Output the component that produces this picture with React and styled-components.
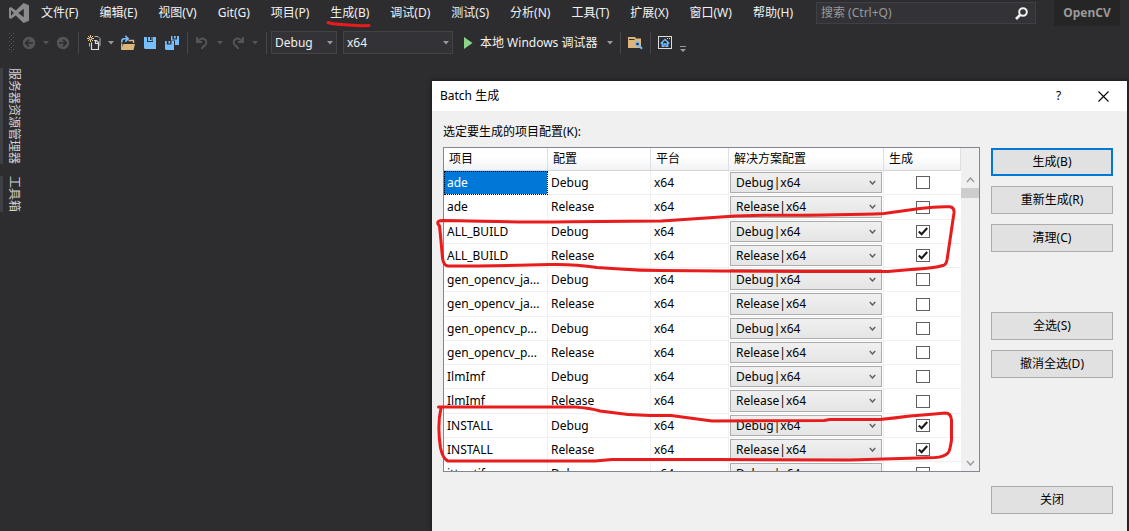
import React from "react";
import styled, { createGlobalStyle, css } from "styled-components";

const GlobalStyle = createGlobalStyle`
  *, *::before, *::after { box-sizing: border-box; }
  body {
    margin: 0;
    background: #2d2d30;
    font: 12px/16px "Noto Sans", "Noto Sans CJK SC", sans-serif;
  }
  button, input, select { font: inherit; margin: 0; }
`;

const Shell = styled.div`
  display: flex;
  flex-direction: column;
  min-height: 100vh;
  overflow: hidden;
  color: #f1f1f1;
`;

/* ---------- menu bar ---------- */

const TitleRow = styled.header`
  display: flex;
  align-items: center;
  height: 26px;
  padding: 0 9px;
`;

const Menu = styled.nav`
  display: flex;
  flex: 1;
  gap: 21px;
  margin-left: 12px;
`;

const MenuItem = styled.button`
  position: relative;
  padding: 0;
  border: 0;
  background: none;
  color: inherit;
  white-space: nowrap;
`;

const Underline = styled.svg`
  position: absolute;
  left: -4px;
  top: 15px;
  pointer-events: none;
`;

const SearchBox = styled.label`
  display: flex;
  align-items: center;
  width: 220px;
  height: 22px;
  margin-right: 18px;
  padding: 0 7px 0 4px;
  border: 1px solid #3f3f46;
  background: #333337;
`;

const SearchInput = styled.input`
  flex: 1;
  min-width: 0;
  padding: 0;
  border: 0;
  outline: 0;
  background: none;
  color: #f1f1f1;
  &::placeholder { color: #999999; opacity: 1; }
`;

const SolutionName = styled.div`
  width: 66px;
  line-height: 26px;
  text-align: center;
  background: #252526;
  color: #999999;
  font-size: 12px;
  font-weight: 700;
`;

/* ---------- toolbar ---------- */

const ToolbarRow = styled.div`
  display: flex;
  align-items: center;
  height: 33px;
  padding-left: 9px;
`;

const ToolButton = styled.button`
  display: flex;
  align-items: center;
  justify-content: center;
  width: ${(p) => p.$w || 22}px;
  height: 24px;
  padding: 0;
  border: 0;
  background: none;
  color: #999999;
  &:disabled { color: #555558; }
`;

const Separator = styled.span`
  display: flex;
  justify-content: center;
  width: ${(p) => p.$w || 8}px;
  &::before {
    content: "";
    width: 1px;
    height: 22px;
    background: #46464a;
  }
`;

const Grip = styled.svg`
  margin-right: 5px;
`;

const RunButton = styled.button`
  display: flex;
  align-items: center;
  gap: 7px;
  width: 163px;
  height: 24px;
  padding: 0 3px 0 10px;
  border: 0;
  background: none;
  color: inherit;
  white-space: nowrap;
  > svg:last-child {
    margin-left: auto;
    color: #999999;
  }
`;

const Combo = styled.span`
  position: relative;
  display: block;
  width: ${(p) => p.$w}px;
  margin-right: ${(p) => p.$gap || 0}px;
  color: #999999;
  > svg {
    position: absolute;
    right: 4px;
    top: 10px;
    pointer-events: none;
  }
`;

const ToolSelect = styled.select`
  display: block;
  appearance: none;
  width: 100%;
  height: 23px;
  padding: 0 3px;
  border: 1px solid #434346;
  border-radius: 0;
  background: #333337;
  color: #f1f1f1;
`;

/* ---------- workspace ---------- */

const Workspace = styled.main`
  display: flex;
  flex: 1;
  align-items: stretch;
  justify-content: space-between;
  padding-right: 2px;
`;

const SideTabs = styled.aside`
  display: flex;
  flex-direction: column;
  align-items: flex-start;
  gap: 12px;
  padding-top: 9px;
`;

const SideTab = styled.button`
  padding: 0 0 0 3px;
  border: 0;
  border-left: 3px solid #3f3f46;
  background: none;
  color: #d0d0d0;
  line-height: 16px;
  writing-mode: vertical-rl;
  text-orientation: sideways;
  white-space: nowrap;
`;

/* ---------- dialog ---------- */

const Dialog = styled.section`
  position: relative;
  width: 695px;
  margin-top: 22px;
  background: #f0f0f0;
  color: #000000;
  box-shadow: 0 0 4px 1px rgba(0, 0, 0, 0.4);
`;

const DialogTitle = styled.div`
  display: flex;
  align-items: center;
  height: 30px;
  padding: 0 1px 0 8px;
  background: #ffffff;
`;

const DialogHeading = styled.h1`
  flex: 1;
  margin: 0;
  font-size: 12px;
  font-weight: 400;
`;

const CaptionButton = styled.button`
  display: flex;
  align-items: center;
  justify-content: center;
  width: 45px;
  height: 30px;
  padding: 0;
  border: 0;
  background: none;
  color: #000000;
`;

const ListLabel = styled.div`
  padding: 13px 11px 7px;
`;

const DialogBody = styled.div`
  display: flex;
  align-items: flex-start;
  gap: 11px;
  padding: 0 14px 17px 11px;
`;

const ListBox = styled.div`
  display: flex;
  flex: 1;
  height: 325px;
  border: 1px solid #828790;
  background: #ffffff;
  overflow: hidden;
`;

const Grid = styled.table`
  flex: 1;
  align-self: flex-start;
  width: 517px;
  table-layout: fixed;
  border-collapse: separate;
  border-spacing: 0;
`;

const HeadCell = styled.th`
  width: ${(p) => p.$w}px;
  height: 23px;
  padding: 0 5px;
  border-right: 1px solid #dedfe1;
  border-bottom: 1px solid #d5d5d5;
  background: linear-gradient(#ffffff 40%, #f1f2f4);
  font-weight: 400;
  text-align: left;
`;

const Row = styled.tr`
  --row: 24px;
  &:nth-child(4n + 2) { --row: 25px; }
`;

const Cell = styled.td`
  height: var(--row);
  padding: 0 3px;
  border-right: 1px solid #f0f0f0;
  border-bottom: 1px solid #f0f0f0;
  white-space: nowrap;
  ${(p) => p.$selected && css`
    background: #0078d7;
    color: #ffffff;
    outline: 1px dotted #000000;
    outline-offset: -1px;
  `}
`;

const ComboCell = styled(Cell)`
  padding: 0 1px;
`;

const RowCombo = styled.span`
  position: relative;
  display: block;
  > svg {
    position: absolute;
    right: 6px;
    top: 8px;
    pointer-events: none;
  }
`;

const RowSelect = styled.select`
  display: block;
  appearance: none;
  width: 152px;
  height: calc(var(--row) - 3px);
  padding: 0 5px;
  border: 1px solid #acacac;
  border-radius: 0;
  background: linear-gradient(#f0f0f0, #e5e5e5);
  color: #000000;
`;

const CheckCell = styled(Cell)`
  border-right: 0;
`;

const Check = styled.span`
  position: relative;
  display: block;
  width: 14px;
  height: 13px;
  margin: 0 auto;
  > svg {
    position: absolute;
    left: 2px;
    top: 2px;
    pointer-events: none;
    visibility: hidden;
  }
  > input:checked + svg { visibility: visible; }
`;

const CheckInput = styled.input`
  display: block;
  appearance: none;
  width: 14px;
  height: 13px;
  border: 1px solid #606060;
  background: #ffffff;
`;

const ScrollTrack = styled.div`
  display: flex;
  flex-direction: column;
  align-items: center;
  width: 18px;
  padding: 29px 0 5px;
  background: #f0f0f0;
`;

const ScrollThumb = styled.div`
  width: 100%;
  height: 10px;
  margin: 5px 0 auto;
  background: #cdcdcd;
`;

const Actions = styled.div`
  display: flex;
  flex-direction: column;
  gap: 10px;
  width: 122px;
  padding-top: 1px;
`;

const ActionButton = styled.button`
  height: 28px;
  margin-top: ${(p) => p.$above || 0}px;
  padding: 0;
  border: ${(p) => (p.$primary ? "2px solid #0078d7" : "1px solid #adadad")};
  background: #e1e1e1;
  color: #000000;
`;

const Marks = styled.svg`
  position: absolute;
  left: 0;
  top: 0;
  pointer-events: none;
`;

/* ---------- drawings ---------- */

const Logo = () => (
  <svg width="20" height="20" viewBox="0 0 20 20" aria-hidden="true">
    <path
      fill="#8a8a8c"
      fillRule="evenodd"
      d="M14.5 0 20 2.3V17.7L14.5 20 6.8 12.4 2 16 0 15V5L2 4 6.8 7.6ZM14.8 5.8 9.3 10 14.8 14.2ZM2 7.2V12.8L4.8 10Z"
    />
  </svg>
);

const Caret = () => (
  <svg width="6" height="4" viewBox="0 0 6 4" aria-hidden="true">
    <path fill="currentColor" d="M0 0H6L3 3.5Z" />
  </svg>
);

const CircleArrow = ({ flip }) => (
  <svg width="14" height="14" viewBox="0 0 14 14" aria-hidden="true">
    <circle cx="7" cy="7" r="6.2" fill="currentColor" />
    <path
      transform={flip ? "matrix(-1 0 0 1 14 0)" : undefined}
      d="M11 7H4M7 3.7 3.7 7 7 10.3"
      fill="none"
      stroke="#2d2d30"
      strokeWidth="1.7"
    />
  </svg>
);

const NewItemIcon = () => (
  <svg width="14" height="16" viewBox="0 0 14 16" aria-hidden="true">
    <path d="M7.500 1.500H11L13 3.500V11M2.500 8V11.500" fill="none" stroke="#b4b4b4" />
    <path d="M4.500 7.500V14.500H11.500V7.500L9.500 5.500H7M8.500 5.500V8.500H11.500" fill="none" stroke="#dcdcdc" strokeWidth="1.2" />
    <path d="M3.500 0V7M0 3.500H7M1 1 6 6M6 1 1 6" stroke="#f2cf8d" strokeWidth="1" />
    <circle cx="3.500" cy="3.500" r="1" fill="#2d2d30" />
  </svg>
);

const OpenIcon = () => (
  <svg width="16" height="16" viewBox="0 0 16 16" aria-hidden="true">
    <path d="M8.500 5.500H13.500V8M1.700 8.500V14" fill="none" stroke="#dcb67a" strokeWidth="1.4" />
    <path d="M3.500 9H15L13.500 15H1Z" fill="#dcb67a" />
    <path d="M1.800 7.500V6C1.800 4.500 2.800 3.700 4.300 3.700H8M5.300 .800 8.200 3.700 5.300 6.600" fill="none" stroke="#75bfff" strokeWidth="1.6" />
  </svg>
);

const SaveIcon = () => (
  <svg width="14" height="14" viewBox="0 0 14 14" aria-hidden="true">
    <path fill="#75bfff" d="M1 1H4V6H10V1H13V13H2L1 12Z" />
    <path fill="#75bfff" d="M5 1H7V4H5ZM8.500 1H9.500V5H5V4H8.500Z" />
  </svg>
);

const SaveAllIcon = () => (
  <svg width="14" height="14" viewBox="0 0 14 14" aria-hidden="true">
    <path fill="#75bfff" d="M6 0H7.500V3.500H12V0H14V9H10V4.500H6ZM9 0H10.700V2.500H9Z" />
    <path fill="#75bfff" d="M0 5H1.700V8.500H6.500V5H9V14H1L0 13ZM3.500 5H5.200V7.500H3.500Z" />
  </svg>
);

const TurnIcon = ({ flip }) => (
  <svg width="14" height="14" viewBox="0 0 14 14" aria-hidden="true">
    <path
      transform={flip ? "matrix(-1 0 0 1 14 0)" : undefined}
      d="M2 1V6H7M2.500 5.500C5 2.500 8 1.800 10 3.500 12 5.300 11.500 7.800 10 9.300L6.500 12.800"
      fill="none"
      stroke="currentColor"
      strokeWidth="2"
    />
  </svg>
);

const FindFolderIcon = () => (
  <svg width="16" height="14" viewBox="0 0 16 14" aria-hidden="true">
    <path fill="#dcb67a" d="M1 1H8L9 2.500H14V12H1Z" />
    <path stroke="#2d2d30" strokeWidth="1" d="M2 3.500H7.500" />
    <path d="M11.500 9 15 12.700" stroke="#75bfff" strokeWidth="2" />
    <circle cx="10.500" cy="8" r="2" fill="#2d2d30" stroke="#75bfff" strokeWidth="1.4" />
  </svg>
);

const HomeIcon = () => (
  <svg width="14" height="13" viewBox="0 0 14 13" aria-hidden="true">
    <rect x=".5" y=".5" width="13" height="12" fill="none" stroke="#dcdcdc" />
    <path d="M9 2.500H10M11 2.500H12" stroke="#dcdcdc" />
    <path d="M2.800 7.500 7 3.500 11.200 7.500M4.300 6.500V10.300H6V8H8V10.300H9.700V6.500" fill="none" stroke="#75bfff" strokeWidth="1.3" />
  </svg>
);

const Chevron = ({ up, small }) => (
  <svg width={small ? 7 : 9} height={small ? 5 : 6} viewBox="0 0 9 6" aria-hidden="true">
    <path
      d={up ? "M1 5 4.5 1 8 5" : "M1 1 4.5 5 8 1"}
      fill="none"
      stroke={small ? "#606060" : "#9a9a9a"}
      strokeWidth={small ? 1.8 : 1.4}
    />
  </svg>
);

const Tick = () => (
  <svg width="10" height="9" viewBox="0 0 10 9" aria-hidden="true">
    <path d="M.8 4.5 3.6 7.2 9.2 1" fill="none" stroke="#1a1a1a" strokeWidth="2.1" />
  </svg>
);

/* ---------- data ---------- */

const MENUS = [
  "文件(F)", "编辑(E)", "视图(V)", "Git(G)", "项目(P)", "生成(B)", "调试(D)",
  "测试(S)", "分析(N)", "工具(T)", "扩展(X)", "窗口(W)", "帮助(H)",
];

const PROJECTS = [
  ["ade", "Debug"],
  ["ade", "Release"],
  ["ALL_BUILD", "Debug", true],
  ["ALL_BUILD", "Release", true],
  ["gen_opencv_ja...", "Debug"],
  ["gen_opencv_ja...", "Release"],
  ["gen_opencv_p...", "Debug"],
  ["gen_opencv_p...", "Release"],
  ["IlmImf", "Debug"],
  ["IlmImf", "Release"],
  ["INSTALL", "Debug", true],
  ["INSTALL", "Release", true],
  ["ittnotify", "Debug"],
];

const COLUMNS = [["项目", 104], ["配置", 103], ["平台", 78], ["解决方案配置", 155], ["生成", 77]];

function Toolbar() {
  return (
    <ToolbarRow role="toolbar">
      <Grip width="5" height="20" viewBox="0 0 5 20" aria-hidden="true">
        <path d="M.5 0V20M4.5 0V20" stroke="#5a5a5e" strokeDasharray="1 3" />
        <path d="M2.5 2V20" stroke="#5a5a5e" strokeDasharray="1 3" />
      </Grip>
      <ToolButton $w={20} disabled aria-label="后退"><CircleArrow /></ToolButton>
      <ToolButton $w={14} disabled aria-label="后退列表"><Caret /></ToolButton>
      <ToolButton $w={20} disabled aria-label="前进"><CircleArrow flip /></ToolButton>
      <Separator $w={10} />
      <ToolButton aria-label="新建"><NewItemIcon /></ToolButton>
      <ToolButton $w={12} aria-label="新建列表"><Caret /></ToolButton>
      <ToolButton aria-label="打开"><OpenIcon /></ToolButton>
      <ToolButton aria-label="保存"><SaveIcon /></ToolButton>
      <ToolButton aria-label="全部保存"><SaveAllIcon /></ToolButton>
      <Separator />
      <ToolButton disabled aria-label="撤消"><TurnIcon /></ToolButton>
      <ToolButton $w={14} disabled aria-label="撤消列表"><Caret /></ToolButton>
      <ToolButton disabled aria-label="重做"><TurnIcon flip /></ToolButton>
      <ToolButton $w={12} disabled aria-label="重做列表"><Caret /></ToolButton>
      <Separator $w={10} />
      <Combo $w={66} $gap={6}>
        <ToolSelect aria-label="配置" defaultValue="Debug">
          <option>Debug</option>
          <option>Release</option>
        </ToolSelect>
        <Caret />
      </Combo>
      <Combo $w={110}>
        <ToolSelect aria-label="平台"><option>x64</option></ToolSelect>
        <Caret />
      </Combo>
      <RunButton>
        <svg width="10" height="12" viewBox="0 0 10 12" aria-hidden="true">
          <path fill="#8ad48a" d="M1 0 9.5 6 1 12Z" />
        </svg>
        本地 Windows 调试器
        <Caret />
      </RunButton>
      <Separator />
      <ToolButton aria-label="在文件中查找"><FindFolderIcon /></ToolButton>
      <Separator />
      <ToolButton aria-label="主页"><HomeIcon /></ToolButton>
      <ToolButton $w={14} aria-label="工具栏选项">
        <svg width="6" height="18" viewBox="0 0 6 18" aria-hidden="true">
          <path fill="currentColor" d="M0 12H6V13H0ZM0 15H6L3 18Z" />
        </svg>
      </ToolButton>
    </ToolbarRow>
  );
}

function ProjectRow({ name, config, checked, selected }) {
  const target = `${config}|x64`;
  return (
    <Row>
      <Cell $selected={selected}>{name}</Cell>
      <Cell>{config}</Cell>
      <Cell>x64</Cell>
      <ComboCell>
        <RowCombo>
          <RowSelect aria-label={`${name} 解决方案配置`} defaultValue={target}>
            <option>Debug|x64</option>
            <option>Release|x64</option>
          </RowSelect>
          <Chevron small />
        </RowCombo>
      </ComboCell>
      <CheckCell>
        <Check>
          <CheckInput type="checkbox" aria-label={`生成 ${name} ${config}`} defaultChecked={checked} />
          <Tick />
        </Check>
      </CheckCell>
    </Row>
  );
}

function BatchDialog() {
  return (
    <Dialog role="dialog" aria-labelledby="batch-title">
      <DialogTitle>
        <DialogHeading id="batch-title">Batch 生成</DialogHeading>
        <CaptionButton>?</CaptionButton>
        <CaptionButton aria-label="关闭窗口">
          <svg width="11" height="11" viewBox="0 0 11 11" aria-hidden="true">
            <path d="M.5 .5 10.5 10.5M10.5 .5 .5 10.5" stroke="#000000" strokeWidth="1.1" />
          </svg>
        </CaptionButton>
      </DialogTitle>
      <ListLabel id="project-list">选定要生成的项目配置(K):</ListLabel>
      <DialogBody>
        <ListBox>
          <Grid aria-labelledby="project-list">
            <thead>
              <tr>
                {COLUMNS.map(([title, width]) => (
                  <HeadCell key={title} $w={width} scope="col">{title}</HeadCell>
                ))}
              </tr>
            </thead>
            <tbody>
              {PROJECTS.map(([name, config, checked], i) => (
                <ProjectRow key={name + config} name={name} config={config} checked={checked} selected={i === 0} />
              ))}
            </tbody>
          </Grid>
          <ScrollTrack>
            <Chevron up />
            <ScrollThumb />
            <Chevron />
          </ScrollTrack>
        </ListBox>
        <Actions>
          <ActionButton $primary>生成(B)</ActionButton>
          <ActionButton>重新生成(R)</ActionButton>
          <ActionButton>清理(C)</ActionButton>
          <ActionButton $above={50}>全选(S)</ActionButton>
          <ActionButton>撤消全选(D)</ActionButton>
          <ActionButton $above={98}>关闭</ActionButton>
        </Actions>
      </DialogBody>
      <Marks width="695" height="450" viewBox="432 81 695 450" aria-hidden="true">
        <g fill="none" stroke="#e81c1c" strokeWidth="3" strokeLinecap="round" strokeLinejoin="round">
          <path d="M438 224C437 221 439 220.7 443 220.5 C480 221 520 222.5 555 222 S625 221 662 221 Q690 219 728 216.5 C760 214.5 790 215.5 824 215 S865 214.5 884 213.5 Q902 211 920 208.5 C933 206.8 942 206.5 950 206.8 Q954.5 207.5 954 213 Q952 226 950 240 L947 260 Q946 265 943 265.5 Q935 268 911 269.5 L888 271.5 H805 L720 271 L660 270.5 Q640 270.5 620 269 L597 267.5 Q575 264 550 264.5 Q495 266 448 266 Q443.5 265.5 442.5 258 Q441 240 439.5 226Z" />
          <path d="M438.5 407H575Q590 408 600 411Q625 415 650 415.5H671L712 421L824 420.5L830 419.5L880 419.5Q895 418 910 416Q930 414.5 945 413Q951 413 951.5 420V440Q950 451 948 453Q944 457 935 457.5Q900 458.5 850 460L720 459.5H612L595 461H448Q443 459 440.5 448Q437 425 441 408" />
        </g>
      </Marks>
    </Dialog>
  );
}

export default function App() {
  return (
    <Shell>
      <GlobalStyle />
      <TitleRow>
        <Logo />
        <Menu>
          {MENUS.map((label) => (
            <MenuItem key={label}>
              {label}
              {label === "生成(B)" && (
                <Underline width="46" height="8" viewBox="0 0 46 8" aria-hidden="true">
                  <path d="M2 2.5Q6 4 16 4.5Q30 6 43 5.5" fill="none" stroke="#e81c1c" strokeWidth="3" strokeLinecap="round" />
                </Underline>
              )}
            </MenuItem>
          ))}
        </Menu>
        <SearchBox>
          <SearchInput placeholder="搜索 (Ctrl+Q)" aria-label="搜索" />
          <svg width="13" height="13" viewBox="0 0 13 13" aria-hidden="true">
            <circle cx="8" cy="5" r="3.8" fill="none" stroke="#f1f1f1" strokeWidth="2" />
            <path d="M5.5 7.5 1 12" stroke="#f1f1f1" strokeWidth="2.6" />
          </svg>
        </SearchBox>
        <SolutionName>OpenCV</SolutionName>
      </TitleRow>
      <Toolbar />
      <Workspace>
        <SideTabs>
          <SideTab>服务器资源管理器</SideTab>
          <SideTab>工具箱</SideTab>
        </SideTabs>
        <BatchDialog />
      </Workspace>
    </Shell>
  );
}
